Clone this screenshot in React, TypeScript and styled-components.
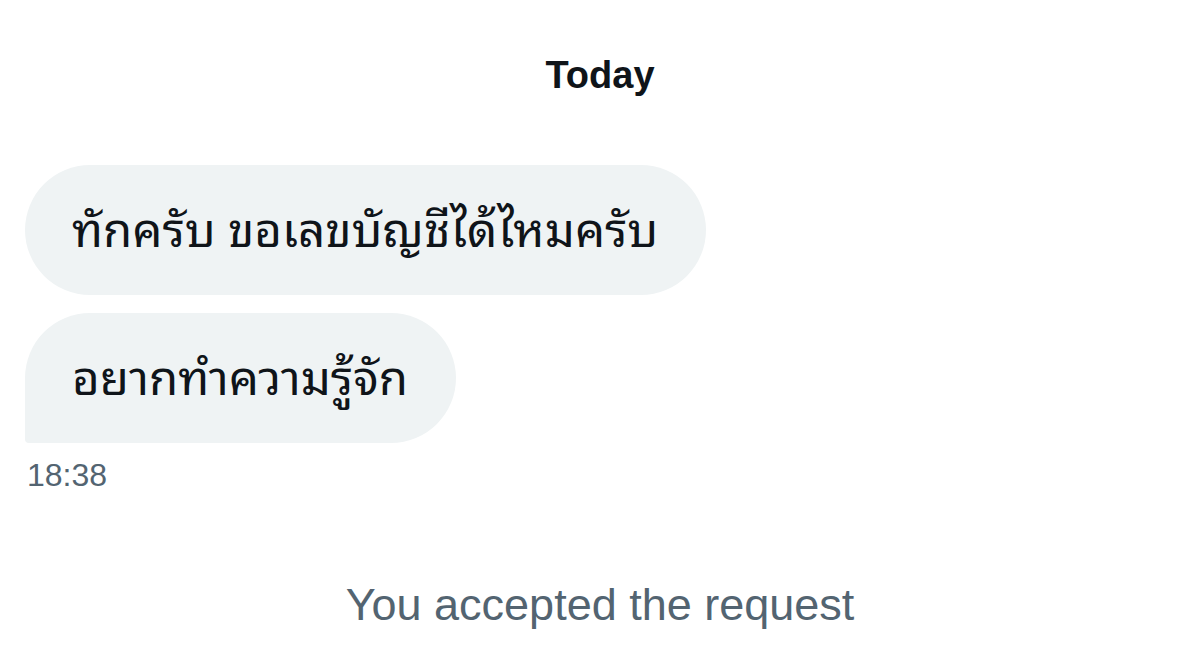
import React from 'react'
import styled, { createGlobalStyle } from 'styled-components'

const GlobalStyle = createGlobalStyle`
  html, body {
    margin: 0;
    padding: 0;
    background: #ffffff;
  }
  body {
    font-family: "Liberation Sans", "Noto Sans Thai Looped", "Noto Sans", sans-serif;
    color: #0f1419;
  }
`

const Page = styled.div`
  width: 1200px;
  height: 651px;
  display: flex;
  flex-direction: column;
  padding: 0 25px;
  box-sizing: border-box;
  overflow: hidden;
`

const DayLabel = styled.div`
  margin-top: 53px;
  text-align: center;
  font-size: 38px;
  font-weight: 700;
  line-height: 44px;
  color: #0f1419;
`

const Thread = styled.div`
  margin-top: 68px;
  display: flex;
  flex-direction: column;
  align-items: flex-start;
  gap: 18px;
`

const Bubble = styled.div<{ $last?: boolean }>`
  height: 130px;
  box-sizing: border-box;
  display: flex;
  align-items: center;
  padding: 0 48px 8px 47px;
  background: #eff3f4;
  border-radius: ${(p) => (p.$last ? '65px 65px 65px 4px' : '65px')};
  font-family: "Noto Sans Thai Looped", "Noto Sans", sans-serif;
  font-size: 47.5px;
  color: #0f1419;
  white-space: nowrap;
`

const Time = styled.div`
  margin-top: 14px;
  margin-left: 2px;
  font-size: 32px;
  line-height: 36px;
  color: #536471;
`

const Notice = styled.div`
  margin-top: 86px;
  text-align: center;
  font-size: 45px;
  line-height: 52px;
  color: #536471;
`

export default function App() {
  return (
    <>
      <GlobalStyle />
      <Page>
        <DayLabel>Today</DayLabel>
        <Thread>
          <Bubble>ทักครับ ขอเลขบัญชีได้ไหมครับ</Bubble>
          <Bubble $last>อยากทำความรู้จัก</Bubble>
        </Thread>
        <Time>18:38</Time>
        <Notice>You accepted the request</Notice>
      </Page>
    </>
  )
}
